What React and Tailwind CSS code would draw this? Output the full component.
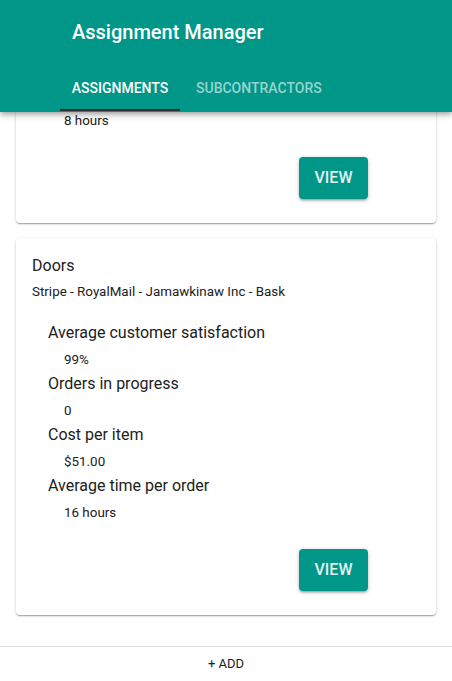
import React from "react";

const cards = [
  {
    title: "Windows",
    sub: "Stripe - RoyalMail - Jamawkinaw Inc",
    stats: [
      ["Average customer satisfaction", "95%"],
      ["Orders in progress", "2"],
      ["Cost per item", "$120.00"],
      ["Average time per order", "8 hours"],
    ],
  },
  {
    title: "Doors",
    sub: "Stripe - RoyalMail - Jamawkinaw Inc - Bask",
    stats: [
      ["Average customer satisfaction", "99%"],
      ["Orders in progress", "0"],
      ["Cost per item", "$51.00"],
      ["Average time per order", "16 hours"],
    ],
  },
];

function Card({ c, first }) {
  return (
    <div
      className={
        "bg-white rounded-[4px] shadow-[0_1px_3px_rgba(0,0,0,0.2),0_1px_1px_rgba(0,0,0,0.14),0_2px_1px_-1px_rgba(0,0,0,0.12)] px-4 pt-4 pb-6 " +
        (first ? "-mt-[266px]" : "")
      }
    >
      <div className="text-[16px] leading-[24px] text-[#212121]">{c.title}</div>
      <div className="mt-[4px] text-[13.4px] leading-[20px] text-[#212121]">{c.sub}</div>
      <div className="mt-[19px] pl-4">
        {c.stats.map(([l, v], i) => (
          <div key={i} className={i > 0 ? "mt-[2px]" : ""}>
            <div className="text-[16px] leading-[24px] text-[#212121]">{l}</div>
            <div className="mt-[5px] pl-4 text-[13.4px] leading-[20px] text-[#212121]">{v}</div>
          </div>
        ))}
      </div>
      <div className="mt-[26px] flex justify-end pr-[52px]">
        <button className="h-[42px] w-[69px] rounded-[4px] bg-[#009688] text-[#e0f2f1] text-[16px] font-medium uppercase shadow-[0_1px_5px_rgba(0,0,0,0.2),0_2px_2px_rgba(0,0,0,0.14),0_3px_1px_-2px_rgba(0,0,0,0.12)]">
          View
        </button>
      </div>
    </div>
  );
}

export default function App() {
  return (
    <div
      className="h-[681px] w-[452px] flex flex-col bg-white overflow-hidden"
      style={{ fontFamily: "Roboto, 'Liberation Sans', sans-serif" }}
    >
      <header className="relative z-10 h-[112px] shrink-0 bg-[#009688] text-white shadow-[0_2px_4px_-1px_rgba(0,0,0,0.2),0_4px_5px_0_rgba(0,0,0,0.14),0_1px_10px_0_rgba(0,0,0,0.12)]">
        <div className="h-16 flex items-center pl-[72px] text-[20px] font-medium">Assignment Manager</div>
        <div className="h-12 flex pl-[60px]">
          <div className="relative w-[120px] flex items-center justify-center text-[14px] font-medium uppercase text-white">
            Assignments
            <div className="absolute left-0 right-0 bottom-[1px] h-[2px] bg-[#2e2e2e]" />
          </div>
          <div className="flex items-center pl-4 text-[14px] font-medium uppercase text-white/60">Subcontractors</div>
        </div>
      </header>
      <main className="flex-1 overflow-hidden flex flex-col gap-[15px] px-4">
        {cards.map((c, i) => (
          <Card key={i} c={c} first={i === 0} />
        ))}
      </main>
      <footer className="h-[35px] shrink-0 border-t border-[#e0e0e0] flex items-center justify-center text-[13px] text-[#212121] uppercase">
        + Add
      </footer>
    </div>
  );
}
